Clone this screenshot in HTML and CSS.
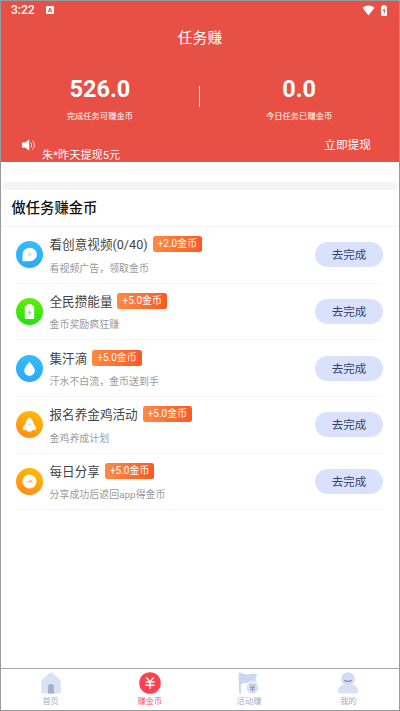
FILE: index.html
```html
<!DOCTYPE html>
<html lang="zh-CN">
<head>
<meta charset="utf-8">
<title>任务赚</title>
<link rel="stylesheet" href="styles.css">
</head>
<body>
<div class="screen">
  <header class="hero">
    <div class="status">
      <span class="time">3:22</span>
      <svg class="app-mark" viewBox="0 0 8 8"><rect width="8" height="8" rx="1" fill="#fff"/><path d="M2.200 6.300 4 2l1.800 4.300M2.900 5h2.200" fill="none" stroke="#e85045"/></svg>
      <svg class="wifi" viewBox="0 0 13 11"><path d="M.4 2.800Q6.500-1.900 12.600 2.800L6.500 10.500Z" fill="#fff"/></svg>
      <svg class="battery" viewBox="0 0 6 11"><path d="M1.600 1V0h2.800v1H5q1 0 1 1v8q0 1-1 1H1q-1 0-1-1V2q0-1 1-1Z" fill="#fff"/><path d="M3.600 2.600 1.700 6H3v3l1.700-3.700H3.400Z" fill="#e85045"/></svg>
    </div>
    <h1>任务赚</h1>
    <div class="stats">
      <div class="stat"><strong>526.0</strong><span>完成任务可赚金币</span></div>
      <i class="divider"></i>
      <div class="stat"><strong>0.0</strong><span>今日任务已赚金币</span></div>
    </div>
    <div class="notice">
      <svg class="speaker" viewBox="0 0 14 12"><path d="M0 3.500h3L7.200.5v11L3 8.500H0Z" fill="#fff"/><path d="M8.800 3.500q1.800 2.500 0 5M10.600 1.600q3.600 4.400 0 8.800" fill="none" stroke="#fff" stroke-width=".9" opacity=".85"/></svg>
      <div class="ticker"><span>朱*昨天提现5元</span></div>
      <a class="withdraw">立即提现</a>
    </div>
  </header>
  <div class="band"></div>
  <h2>做任务赚金币</h2>
  <main class="tasks">
    <section class="task">
      <svg class="icon" viewBox="0 0 27 27"><defs><linearGradient id="blue" x2="0" y2="1"><stop stop-color="#33bdfc"/><stop offset="1" stop-color="#2ba9fb"/></linearGradient></defs><circle cx="13.500" cy="13.500" r="13.500" fill="url(#blue)"/><path d="M6.500 20.300V13.500a7.200 6.800 0 1 1 7.200 6.800Z" fill="#fff"/><circle cx="13.500" cy="13.300" r="1.900" fill="#c9ecff"/></svg>
      <div class="info"><div class="line"><b>看创意视频(0/40)</b><em>+2.0金币</em></div><p>看视频广告，领取金币</p></div>
      <button>去完成</button>
    </section>
    <section class="task">
      <svg class="icon" viewBox="0 0 27 27"><defs><linearGradient id="green" x2="0" y2="1"><stop stop-color="#62ed07"/><stop offset="1" stop-color="#26df13"/></linearGradient></defs><circle cx="13.500" cy="13.500" r="13.500" fill="url(#green)"/><path d="M11 6h5v1.700h1.200q1 0 1 1V20q0 1-1 1H9.800q-1 0-1-1V8.700q0-1 1-1H11Z" fill="#fff"/><path d="M14.500 10.500 11.300 15h2L12.500 18.500l3.200-4.600h-2Z" fill="#8cec75"/></svg>
      <div class="info"><div class="line"><b>全民攒能量</b><em>+5.0金币</em></div><p>金币奖励疯狂赚</p></div>
      <button>去完成</button>
    </section>
    <section class="task">
      <svg class="icon" viewBox="0 0 27 27"><circle cx="13.500" cy="13.500" r="13.500" fill="url(#blue)"/><path d="M13.500 6.500C11.500 9.500 8.200 12.500 8.200 15.500a5.300 5.200 0 0 0 10.600 0C18.800 12.500 15.500 9.500 13.500 6.500Z" fill="#fff"/></svg>
      <div class="info"><div class="line"><b>集汗滴</b><em>+5.0金币</em></div><p>汗水不白流，金币送到手</p></div>
      <button>去完成</button>
    </section>
    <section class="task">
      <svg class="icon" viewBox="0 0 27 27"><defs><linearGradient id="gold" x1=".7" x2=".3" y2="1"><stop stop-color="#ffbb05"/><stop offset="1" stop-color="#ff8d16"/></linearGradient></defs><circle cx="13.500" cy="13.500" r="13.500" fill="url(#gold)"/><path d="M13.500 6.500Q9.800 9 9.300 13L6.900 16.200v3l3.400-.3 1.200 1.600h4l1.200-1.600 3.400.3v-3L17.700 13Q17.200 9 13.500 6.500Z" fill="#fff"/><circle cx="13.500" cy="13.500" r="1.100" fill="#ffd09a"/></svg>
      <div class="info"><div class="line"><b>报名养金鸡活动</b><em>+5.0金币</em></div><p>金鸡养成计划</p></div>
      <button>去完成</button>
    </section>
    <section class="task">
      <svg class="icon" viewBox="0 0 27 27"><circle cx="13.500" cy="13.500" r="13.500" fill="url(#gold)"/><circle cx="13.500" cy="13.500" r="7" fill="#fff"/><path d="M10 14.800q1-2.300 4-2.400l.2-1.100 3 2-3.400 1.900.2-1.200q-2-.2-4 .8Z" fill="#ffc078"/></svg>
      <div class="info"><div class="line"><b>每日分享</b><em>+5.0金币</em></div><p>分享成功后返回app得金币</p></div>
      <button>去完成</button>
    </section>
  </main>
  <nav class="tabs">
    <a><svg viewBox="0 0 22 22"><path d="M9.500 1q1.500-1.200 3 0L20 7.500q.7.600.7 1.500v12.500H1.300V9q0-.9.700-1.500Z" fill="#dae2f5"/><path d="M8 21.500v-6.200a3 3.300 0 0 1 6 0v6.200Z" fill="#a4b1ce"/></svg>首页</a>
    <a class="active"><svg viewBox="0 0 22 22"><circle cx="11" cy="11" r="10.800" fill="#fb4250"/><path d="m7.300 5.500 3.700 4.300 3.700-4.300M6.500 10h9M6.500 13.200h9M11 9.800v7.200" fill="none" stroke="#fff" stroke-width="1.400"/></svg>赚金币</a>
    <a><svg viewBox="0 0 22 22"><path d="M.5.500h2q6 3 9 1.500 4-1.200 7.500.5L17.500 7l2 4.500Q9 10 3 12v9.700H1.200Z" fill="#cbd7f0"/><circle cx="14.500" cy="15.800" r="6.700" fill="#fff"/><circle cx="14.500" cy="15.800" r="5.800" fill="#d5dff3"/><path d="m12.200 12.500 2.300 2.700 2.300-2.700M12 15.500h5M12 17.300h5M14.500 15v4.500" fill="none" stroke="#8f9dbe"/></svg>活动赚</a>
    <a><svg viewBox="0 0 22 22"><circle cx="11" cy="7" r="6.800" fill="#d1dcf4"/><path d="M1 19.500q0-6 6-7.200 4 2.300 8 0 6 1.200 6 7.200 0 2-2 2H3q-2 0-2-2Z" fill="#d8e1f5"/><path d="M7.300 8.400q3.700 2 7.400 0" fill="none" stroke="#7e8cb1" stroke-width="1.300"/></svg>我的</a>
  </nav>
</div>
</body>
</html>
```

FILE: styles.css
```css
* { box-sizing: border-box; margin: 0; padding: 0; }
body { background: #fff; font-family: Roboto, "Noto Sans CJK SC", sans-serif; }
svg { display: block; flex: none; }
.screen { display: flex; flex-direction: column; width: 400px; height: 711px; border: 1px solid #999; }
.hero { height: 161px; background: #e85045; color: #fff; }
.status { display: flex; align-items: center; height: 18px; padding: 0 12px 0 10px; }
.time { width: 35px; font-size: 12px; font-weight: 500; line-height: 19px; }
.app-mark { width: 8px; height: 8px; }
.wifi { width: 13px; height: 11px; margin-left: auto; }
.battery { width: 6px; height: 11px; margin-left: 6px; }
h1 { height: 38px; font-size: 14.8px; font-weight: 400; line-height: 39px; text-align: center; }
.stats { display: flex; align-items: center; height: 75px; padding-top: 3px; padding-right: 1px; }
.stat { display: flex; flex: 1; flex-direction: column; align-items: center; }
.stat strong { height: 34px; margin-top: 5px; font-size: 23.5px; font-weight: 700; line-height: 34px; }
.stat span { height: 20px; font-size: 8.3px; line-height: 20px; }
.divider { width: 1.500px; height: 21px; background: #fbdcd9; }
.notice { display: flex; height: 29px; padding: 0 28px 0 21px; }
.speaker { width: 14px; height: 12px; margin-top: 7px; }
.ticker { width: 120px; height: 28px; margin-left: 6px; padding-top: 15px; overflow: hidden; font-size: 11.2px; line-height: 18px; white-space: nowrap; }
.withdraw { margin-left: auto; font-size: 11.7px; line-height: 27px; }
.band { flex: none; height: 8px; margin: 20px 1px 0; background: #f4f4f6; }
h2 { flex: none; height: 37px; padding-left: 10.500px; border-bottom: 1px solid #f4f4f5; color: #111; font-size: 14.3px; font-weight: 500; line-height: 37px; }
.tasks { flex: 1; padding: 0 16px 0 15px; }
.task { display: flex; align-items: center; height: 56.65px; border-bottom: 1px solid #f5f5f5; }
.icon { width: 27px; height: 27px; }
.info { flex: 1; margin-left: 6.500px; }
.line { display: flex; align-items: center; height: 26px; }
.line b { color: #444; font-size: 12.6px; font-weight: 400; white-space: nowrap; }
.line em { height: 16px; margin: 1px 0 0 5px; padding: 0 5px; border-radius: 2.500px; background: linear-gradient(90deg, #ff8a43, #fb5a22); color: #fff; font-size: 10px; font-style: normal; line-height: 16px; white-space: nowrap; }
.info p { height: 22px; color: #999; font-size: 9.950px; line-height: 23px; }
button { width: 68px; height: 25px; border: 0; border-radius: 13px; background: #d9e1fd; color: #35426c; font-family: inherit; font-size: 11.500px; line-height: 26px; }
.tabs { display: grid; grid-template-columns: repeat(4, 1fr); height: 42px; padding-right: 1px; border-top: 1px solid #aaa; }
.tabs a { display: flex; flex-direction: column; align-items: center; padding-top: 3px; color: #a4adc2; font-size: 8.200px; line-height: 14px; }
.tabs svg { width: 22px; height: 22px; }
.tabs .active { color: #fb5966; }
```
